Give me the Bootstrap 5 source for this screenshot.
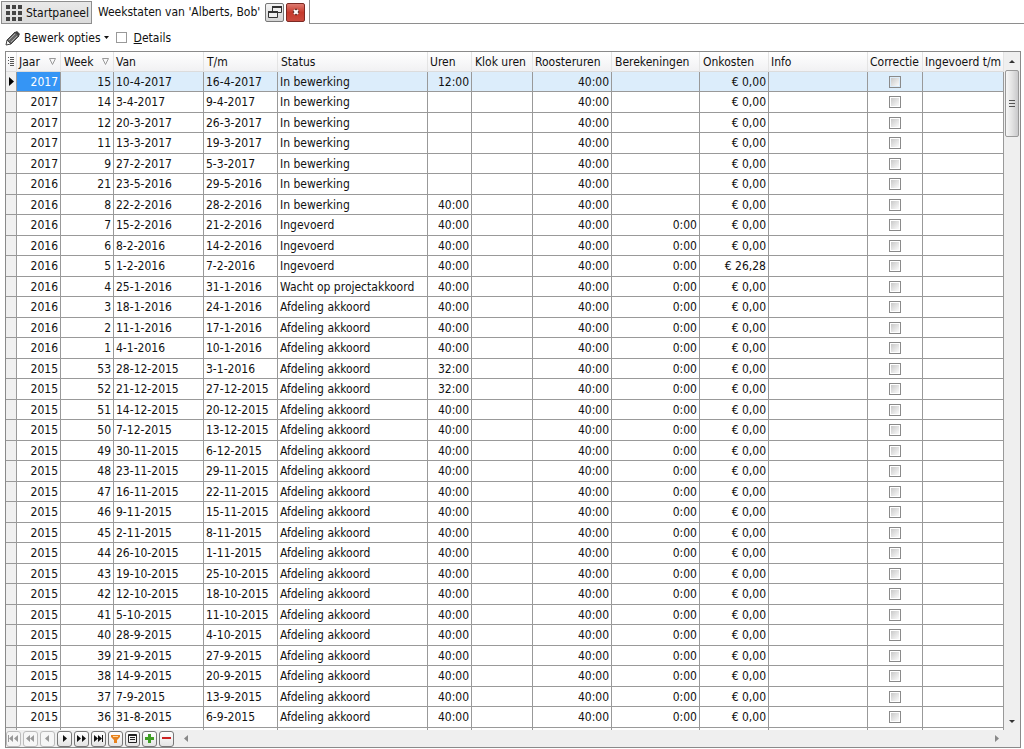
<!DOCTYPE html>
<html lang="nl">
<head>
<meta charset="utf-8">
<meta name="viewport" content="width=device-width, initial-scale=1">
<title>Weekstaten van 'Alberts, Bob'</title>
<link href="https://cdn.jsdelivr.net/npm/bootstrap@5.3.0/dist/css/bootstrap.min.css" rel="stylesheet">
<style>
  body { font-family: "DejaVu Sans Condensed", "Noto Sans", sans-serif; font-size: 12px; line-height: 16px; color: #111; background: #fff; }
  svg { display: block; flex: none; }
  button { font: inherit; color: inherit; }

  .tabstrip { height: 24px; }
  .start-tab { height: 23px; margin: 1px 0 0 1px; padding: 1px 2px 0 4px; gap: 4px; border: 1px solid #8e8e8e; background: linear-gradient(#e9e9e9, #dcdcdc); }
  .page-tab { padding: 0 4px 0 6px; gap: 2px; }
  .page-title { padding-right: 3px; }
  .tab-rest { border-left: 1px solid #8e8e8e; border-bottom: 1px solid #8e8e8e; }
  .tab-btn { width: 19px; height: 19px; border: 1px solid #777; border-radius: 2px; background: linear-gradient(#f4f4f4, #d4d4d4); }
  .tab-close { border-color: #7c2a24; background: linear-gradient(#dd7a70, #c63a2c 50%, #c94a3e); }

  .toolrow { height: 27px; padding: 0 5px; gap: 7px; }
  .menu-btn { gap: 3px; }
  .flat-check { appearance: none; width: 11px; height: 11px; border: 1px solid #999; background: #fff; margin: 0; }

  .gridframe { margin: 0 3px 1px 5px; border: 1px solid #8a8a8a; }
  .weeks { table-layout: fixed; border-collapse: separate; border-spacing: 0; }
  .weeks th { height: 20px; padding: 0 0 0 3px; font-weight: 400; white-space: nowrap; background: linear-gradient(#fff, #f1f1f3); border-right: 1px solid #e4e4e4; border-bottom: 1px solid #dcdcdc; }
  .weeks th.tight { padding-left: 2px; }
  .weeks td { height: 21px; padding: 0 2px; line-height: 16px; white-space: nowrap; border-right: 1px solid #999; border-bottom: 1px solid #999; }
  .weeks tbody tr:nth-child(odd) td { height: 20px; }
  .weeks td.num { text-align: right; }
  .weeks td:first-child { background: #f0f0f0; padding: 0 0 0 3px; }
  .weeks tr.current td { background: #dcedfb; }
  .weeks tr.current td:first-child { background: #f0f0f0; }
  .weeks tr.current td:nth-child(2) { background: #3595f5; color: #fff; }
  .weeks tfoot td { height: 2px; line-height: 0; border-bottom: 0; }
  .cell-check { appearance: none; display: block; width: 12px; height: 12px; margin: 0 auto; border: 1px solid #8a8a8a; background: linear-gradient(135deg, #c9c9c9, #fafafa) content-box #f4f4f4; padding: 1px; }

  .vscroll { width: 16px; background: #efefef; }
  .scroll-btn { height: 18px; background: none; }
  .thumb { height: 67px; margin: 0 1px; border: 1px solid #999; border-radius: 2px; background: linear-gradient(90deg, #f7f7f7, #e3e3e3 50%, #c9c9cb); }
  .navstrip { height: 17px; padding-right: 21px; gap: 2px; background: #efefef; }
  .nav-btn { width: 15px; height: 16px; border: 1px solid #777; border-radius: 3px; background: linear-gradient(#fff, #e4e4e4); }
  .nav-btn:disabled { border-color: #bbb; color: #999; background: #f6f6f6; }
</style>
</head>
<body class="d-flex flex-column min-vh-100">

<header class="tabstrip d-flex">
  <button type="button" class="start-tab d-flex align-items-center">
    <svg width="16" height="16" fill="#444"><path d="M0 0h4v4H0zM6 0h4v4H6zM12 0h4v4h-4zM0 6h4v4H0zM6 6h4v4H6zM12 6h4v4h-4zM0 12h4v4H0zM6 12h4v4H6zM12 12h4v4h-4z"/></svg>
    <span>Startpaneel</span>
  </button>
  <div class="page-tab d-flex align-items-center">
    <span class="page-title">Weekstaten van 'Alberts, Bob'</span>
    <button type="button" class="tab-btn p-0 d-flex align-items-center justify-content-center" aria-label="Venster losmaken">
      <svg width="16" height="16" fill="#eee" stroke="#333"><path d="M5.5 2.5h9v6h-9z"/><path d="M5 3h10" stroke-width="2"/><path d="M1.5 7.500h9v6h-9z"/><path d="M1 8h10" stroke-width="2"/></svg>
    </button>
    <button type="button" class="tab-btn tab-close p-0 d-flex align-items-center justify-content-center" aria-label="Sluiten">
      <svg width="8" height="8" fill="none"><path d="M2 2l4 4M6 2l-4 4" stroke="#5d201b" stroke-width="4"/><path d="M2 2l4 4M6 2l-4 4" stroke="#fff" stroke-width="2"/></svg>
    </button>
  </div>
  <div class="tab-rest flex-grow-1"></div>
</header>

<div class="toolrow d-flex align-items-center">
  <button type="button" class="menu-btn d-flex align-items-center border-0 bg-transparent p-0">
    <svg width="16" height="16"><path d="M2 10l8-8 4 4-8 8z" fill="#666" stroke="#444"/><path d="M4 10l6-6M6 12l6-6" stroke="#aaa"/><path d="M2 10l4 4-5 1z" fill="#f4f4f4" stroke="#444"/><path d="M10 2l2-1 3 3-1 2z" fill="#444"/></svg>
    <span>Bewerk opties</span>
    <svg width="5" height="3"><path d="M0 0h5L2.5 3z" fill="#111"/></svg>
  </button>
  <input type="checkbox" class="flat-check" id="details">
  <label for="details"><u>D</u>etails</label>
</div>

<main class="gridframe flex-grow-1 d-flex flex-column">
  <div class="d-flex flex-grow-1">
    <div class="flex-fill">
      <table class="weeks w-100">
        <colgroup id="cols"></colgroup>
        <thead>
          <tr>
            <th class="tight"><svg width="7" height="9" stroke="#555"><path d="M0 .5h1M0 3.500h1M0 6.500h1M2 .5h4M2 2.500h4M2 4.500h4M2 6.500h4M2 8.500h4"/></svg></th>
            <th class="tight"><span class="d-flex align-items-center justify-content-between pe-1">Jaar<svg width="7" height="7" fill="none" stroke="#999"><path d="M.5 .5h6l-3 6z"/></svg></span></th>
            <th><span class="d-flex align-items-center justify-content-between pe-1">Week<svg width="7" height="7" fill="none" stroke="#999"><path d="M.5 .5h6l-3 6z"/></svg></span></th>
            <th class="tight">Van</th><th>T/m</th><th>Status</th><th class="tight">Uren</th><th>Klok uren</th><th class="tight">Roosteruren</th><th>Berekeningen</th><th>Onkosten</th><th class="tight">Info</th><th class="tight">Correctie</th><th class="tight">Ingevoerd t/m</th>
          </tr>
        </thead>
        <tbody id="rows"></tbody>
        <tfoot id="tail"></tfoot>
      </table>
    </div>
    <div class="vscroll flex-shrink-0 d-flex flex-column">
      <button type="button" class="scroll-btn border-0 p-0 d-flex align-items-center justify-content-center" aria-label="Omhoog"><svg width="6" height="3"><path d="M0 3h6L3 0z" fill="#333"/></svg></button>
      <div class="thumb d-flex align-items-center justify-content-center"><svg width="6" height="8" stroke="#555"><path d="M0 .5h6M0 3.500h6M0 6.500h6"/></svg></div>
      <button type="button" class="scroll-btn border-0 p-0 mt-auto d-flex align-items-center justify-content-center" aria-label="Omlaag"><svg width="6" height="3"><path d="M0 0h6L3 3z" fill="#333"/></svg></button>
    </div>
  </div>
  <div class="navstrip d-flex align-items-center" id="nav">
    <svg class="ms-2" width="4" height="7"><path d="M4 0v7L0 3.500z" fill="#888"/></svg>
    <svg class="ms-auto" width="4" height="7"><path d="M0 0v7l4-3.500z" fill="#888"/></svg>
  </div>
</main>

<script src="https://cdn.jsdelivr.net/npm/bootstrap@5.3.0/dist/js/bootstrap.bundle.min.js"></script>
<script>
  // Column widths; the Info column (0) takes the remaining space
  const widths = [11, 44, 53, 90, 74, 150, 44, 61, 79, 88, 69, 0, 55, 81];
  document.getElementById('cols').innerHTML = widths.map(w => w ? `<col style="width:${w}px">` : '<col>').join('');
  // The top edge of the next row, cut off by the navigator strip
  document.getElementById('tail').innerHTML = `<tr>${widths.map(() => '<td></td>').join('')}</tr>`;

  // year, week, from, to, status, hours, expenses
  const B = 'In bewerking', I = 'Ingevoerd', W = 'Wacht op projectakkoord', A = 'Afdeling akkoord';
  const data = [
    [2017,15,'10-4-2017','16-4-2017',B,'12:00'], [2017,14,'3-4-2017','9-4-2017',B,''],
    [2017,12,'20-3-2017','26-3-2017',B,''], [2017,11,'13-3-2017','19-3-2017',B,''],
    [2017,9,'27-2-2017','5-3-2017',B,''], [2016,21,'23-5-2016','29-5-2016',B,''],
    [2016,8,'22-2-2016','28-2-2016',B,'40:00'], [2016,7,'15-2-2016','21-2-2016',I,'40:00'],
    [2016,6,'8-2-2016','14-2-2016',I,'40:00'], [2016,5,'1-2-2016','7-2-2016',I,'40:00','€ 26,28'],
    [2016,4,'25-1-2016','31-1-2016',W,'40:00'], [2016,3,'18-1-2016','24-1-2016',A,'40:00'],
    [2016,2,'11-1-2016','17-1-2016',A,'40:00'], [2016,1,'4-1-2016','10-1-2016',A,'40:00'],
    [2015,53,'28-12-2015','3-1-2016',A,'32:00'], [2015,52,'21-12-2015','27-12-2015',A,'32:00'],
    [2015,51,'14-12-2015','20-12-2015',A,'40:00'], [2015,50,'7-12-2015','13-12-2015',A,'40:00'],
    [2015,49,'30-11-2015','6-12-2015',A,'40:00'], [2015,48,'23-11-2015','29-11-2015',A,'40:00'],
    [2015,47,'16-11-2015','22-11-2015',A,'40:00'], [2015,46,'9-11-2015','15-11-2015',A,'40:00'],
    [2015,45,'2-11-2015','8-11-2015',A,'40:00'], [2015,44,'26-10-2015','1-11-2015',A,'40:00'],
    [2015,43,'19-10-2015','25-10-2015',A,'40:00'], [2015,42,'12-10-2015','18-10-2015',A,'40:00'],
    [2015,41,'5-10-2015','11-10-2015',A,'40:00'], [2015,40,'28-9-2015','4-10-2015',A,'40:00'],
    [2015,39,'21-9-2015','27-9-2015',A,'40:00'], [2015,38,'14-9-2015','20-9-2015',A,'40:00'],
    [2015,37,'7-9-2015','13-9-2015',A,'40:00'], [2015,36,'31-8-2015','6-9-2015',A,'40:00']
  ];
  document.getElementById('rows').innerHTML = data.map(([year, week, from, to, status, hours, cost], i) => `
    <tr class="${i ? '' : 'current'}">
      <td>${i ? '' : '<svg width="5" height="9"><path d="M0 0v9l5-4.500z"/></svg>'}</td>
      <td class="num">${year}</td><td class="num">${week}</td><td>${from}</td><td>${to}</td><td>${status}</td>
      <td class="num">${hours}</td><td></td><td class="num">40:00</td>
      <td class="num">${status === B ? '' : '0:00'}</td><td class="num">${cost || '€ 0,00'}</td><td></td>
      <td><input type="checkbox" class="cell-check" aria-label="Correctie week ${week} ${year}"></td><td></td>
    </tr>`).join('');

  const icons = [
    ['Eerste', '<path d="M1 3h1v7H1zM6 3v7L2 6.500zM11 3v7L7 6.500z"/>', 1],
    ['Vorige pagina', '<path d="M6 3v7L2 6.500zM10 3v7L6 6.500z"/>', 1],
    ['Vorige', '<path d="M8 3v7L4 6.500z"/>', 1],
    ['Volgende', '<path d="M5 3v7l4-3.500z"/>'],
    ['Volgende pagina', '<path d="M2 3v7l4-3.500zM7 3v7l4-3.500z"/>'],
    ['Laatste', '<path d="M2 3v7l4-3.500zM6 3v7l4-3.500zM10 3h1v7h-1z"/>'],
    ['Filter', '<path d="M2 3h9v2L8 8v3H5V8L2 5z" fill="#e8821e"/><path d="M4 4.500h5" stroke="#ffd9a0"/>'],
    ['Kolommen', '<path d="M2.500 2.500h8v8h-8zM2 3.500h9M4 5.500h5M4 7.500h5" fill="none" stroke="#222"/>'],
    ['Toevoegen', '<path d="M5 2h3v3h3v3H8v3H5V8H2V5h3z" fill="#3f9e24"/>'],
    ['Verwijderen', '<path d="M2 5h9v2H2z" fill="#cc2222"/>']
  ];
  document.getElementById('nav').insertAdjacentHTML('afterbegin', icons.map(([name, shape, off]) =>
    `<button type="button" class="nav-btn p-0" aria-label="${name}" ${off ? 'disabled' : ''}><svg width="13" height="13" fill="currentColor">${shape}</svg></button>`).join(''));
</script>
</body>
</html>
